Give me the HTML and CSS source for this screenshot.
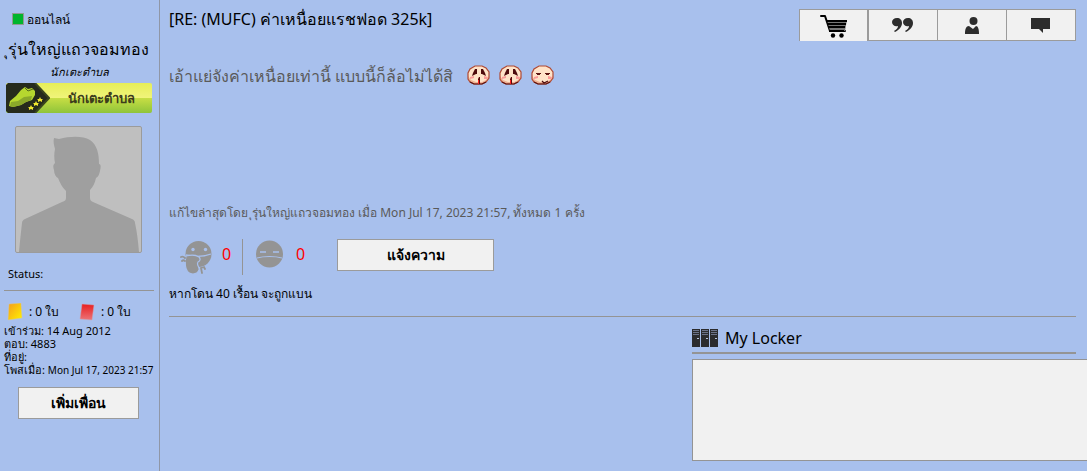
FILE: index.html
```html
<!DOCTYPE html>
<html lang="th">

<head>
    <meta charset="UTF-8">
    <meta name="viewport" content="width=device-width, initial-scale=1.0">
    <title>[RE: (MUFC) ค่าเหนื่อยแรชฟอด 325k]</title>
    <link rel="stylesheet" href="styles.css">
</head>

<body>
    <svg class="sprite" width="0" height="0">
        <symbol id="face" viewBox="0 0 23 20">
            <path d="M8 1h7l4 2 3 4v6l-3 4-4 2H7l-4-2-2-3V8l2-4z" fill="#ffe3c8" />
            <path d="M1 11l3 4 5 2h6l4-2 3-4v2l-3 4-4 2H7l-4-2-2-3z" fill="#f0b294" />
            <path d="M8 1h7l4 2 3 4v6l-3 4-4 2H7l-4-2-2-3V8l2-4z" fill="none" stroke="#b04a34" stroke-width="1.200" />
            <path d="M3 17l4 2h8l4-2" fill="none" stroke="#5d1410" stroke-width="1.200" />
            <path d="M3 12l4-1v2l-4 1zM17 11l4 1-1 2h-3z" fill="#fb9a98" />
        </symbol>
        <symbol id="cry" viewBox="0 0 23 20">
            <use href="#face" />
            <path d="M8 4h2v5H9l-4 2 1-3zM14 4h2l2 4 1 3-4-2h-1z" fill="#4e0b0d" />
            <path d="M11 19v-5l1-2h1v7z" fill="#5d080b" />
            <path d="M11 15h1v4h-1z" fill="#ff2020" />
        </symbol>
        <symbol id="smirk" viewBox="0 0 23 20">
            <use href="#face" />
            <path d="M5 8h5v1H9v1H6V9H5zM14 8h5v1h-1v1h-3V9h-1z" fill="#5d1410" />
            <path d="M11 16l2 2 4-2" fill="none" stroke="#4e0b0d" stroke-width="1.200" />
        </symbol>
    </svg>

    <div class="post">
        <aside class="profile">
            <div class="profile__online"><span class="dot"></span>ออนไลน์</div>
            <div class="profile__name">ุรุ่นใหญ่แถวจอมทอง</div>
            <div class="profile__rank">นักเตะตำบล</div>
            <div class="badge">
                <svg class="badge__icon" width="44" height="30" viewBox="0 0 44 30">
                    <path d="M2 0h27l14 15-14 15H2l-2-2V2z" fill="#262b1c" />
                    <path d="M29 0l14 15-14 15" fill="none" stroke="#3a451d" stroke-width="2" />
                    <path d="M4 18l6-5 5-6 4-3 3 2 4-1 3 3v4l-3 5-6 2-5 3-8 2-4-1z" fill="#b6d72f" />
                    <path d="M5 19l7-1 6-4 8-1-1 4-5 2-5 3-8 2-3-1z" fill="#8aa82a" />
                    <path d="M19 5l3 3 5-2" fill="none" stroke="#526a1a" />
                    <path d="M25 22l1 2h2l-1 1v2l-2-1-2 1v-2l-1-1h2zM30 18l1 2h2l-1 1v2l-2-1-2 1v-2l-1-1h2zM34 14l1 2h2l-1 1v2l-2-1-2 1v-2l-1-1h2z" fill="#f0e62f" />
                </svg>
                <span class="badge__text">นักเตะตำบล</span>
            </div>
            <svg class="avatar" viewBox="0 0 125 125">
                <path d="M38 11l5 1c12-3 24-3 31 1 7 5 9 13 9 24 2 0 2 3 1 7-1 4-2 6-4 7-1 5-3 9-6 12v8c0 2 1 3 3 4l39 17c2 1 3 2 3 4 2 9 3 18 4 29H3c1-12 2-20 3-29 0-2 1-3 3-4l37-17c3-1 4-2 4-4v-7c-4-4-6-8-8-13-2-1-4-4-4-8-1-4-1-5 1-7-1-5-1-9 0-14-1-4-2-7-1-11z" fill="#9f9f9f" />
            </svg>
            <div class="profile__status">Status:</div>
            <div class="cards">
                <svg class="cards__icon" viewBox="0 0 16 18">
                    <defs>
                        <linearGradient id="yellow" x1="0" y1="0" x2="1" y2="1">
                            <stop offset="0" stop-color="#f49c1c" />
                            <stop offset="1" stop-color="#fff200" />
                        </linearGradient>
                    </defs>
                    <path d="M2 1l12-1 1 15-14 2z" fill="url(#yellow)" stroke="#cfc7a8" stroke-width=".5" />
                </svg>
                <span class="cards__count">: 0 ใบ</span>
                <svg class="cards__icon" viewBox="0 0 16 18">
                    <defs>
                        <linearGradient id="red" x1="0" y1="0" x2="0" y2="1">
                            <stop offset="0" stop-color="#e81e20" />
                            <stop offset="1" stop-color="#ec7478" />
                        </linearGradient>
                    </defs>
                    <path d="M3 1l12 1-2 15-12-1z" fill="url(#red)" stroke="#c9a5b4" stroke-width=".5" />
                </svg>
                <span class="cards__count">: 0 ใบ</span>
            </div>
            <ul class="info">
                <li>เข้าร่วม: 14 Aug 2012</li>
                <li>ตอบ: 4883</li>
                <li>ที่อยู่:</li>
                <li>โพสเมื่อ: <span class="info__date">Mon Jul 17, 2023 21:57</span></li>
            </ul>
            <button class="btn btn--friend" type="button">เพิ่มเพื่อน</button>
        </aside>

        <main class="content">
            <header class="head">
                <h1 class="head__title">[RE: (MUFC) ค่าเหนื่อยแรชฟอด 325k]</h1>
                <nav class="tools">
                    <button class="tools__item tools__item--active" type="button" aria-label="ตะกร้า">
                        <svg width="28" height="24" viewBox="0 0 28 24">
                            <path d="M1 2h4l5 15h15" fill="none" stroke="#000" stroke-width="2" stroke-linecap="round" stroke-linejoin="round" />
                            <path d="M7 6h20l-2 11H10z" fill="#777" />
                            <path d="M6 7h21M7 10h19M8 13h17M9 17h15" stroke="#000" stroke-width="2" />
                            <circle cx="13" cy="21.500" r="2.200" />
                            <circle cx="21.500" cy="21.500" r="2.200" />
                        </svg>
                    </button>
                    <button class="tools__item" type="button" aria-label="อ้างอิง">
                        <svg width="22" height="14" viewBox="0 0 22 14" fill="#2d2d2d">
                            <path id="quote" d="M5 0c3 0 5 2 5 5 0 4-3 7-7 9l-1-1c3-2 4-3 4-5-3 1-6-1-6-4 0-2 2-4 5-4z" />
                            <use href="#quote" x="11" />
                        </svg>
                    </button>
                    <button class="tools__item" type="button" aria-label="ข้อมูลส่วนตัว">
                        <svg width="14" height="17" viewBox="0 0 14 17" fill="#2d2d2d">
                            <circle cx="8.500" cy="4" r="4" />
                            <path d="M0 17c0-5 1-8 4-8l4 3 3-3c2 0 3 3 3 8z" />
                        </svg>
                    </button>
                    <button class="tools__item" type="button" aria-label="ข้อความ">
                        <svg width="20" height="16" viewBox="0 0 20 16" fill="#2d2d2d">
                            <path d="M0 1h19v11h-7v4l-4-4H0z" />
                        </svg>
                    </button>
                </nav>
            </header>

            <div class="message">
                เอ้าแย่จังค่าเหนื่อยเท่านี้ แบบนี้ก็ล้อไม่ได้สิ
                <span class="message__emoji">
                    <svg class="emoji"><use href="#cry" /></svg>
                    <svg class="emoji"><use href="#cry" /></svg>
                    <svg class="emoji"><use href="#smirk" /></svg>
                </span>
            </div>
            <p class="edited">แก้ไขล่าสุดโดย ุรุ่นใหญ่แถวจอมทอง เมื่อ Mon Jul 17, 2023 21:57, ทั้งหมด 1 ครั้ง</p>

            <div class="votes">
                <div class="vote">
                    <svg class="vote__icon" viewBox="0 0 34 36">
                        <circle cx="18.500" cy="15" r="13" fill="#949494" />
                        <circle cx="13" cy="10.500" r="1.700" fill="#a8c0ed" />
                        <circle cx="25.500" cy="10.500" r="1.700" fill="#a8c0ed" />
                        <path d="M6 16c8 2 17 2 25-1" fill="none" stroke="#a8c0ed" stroke-width="1.300" />
                        <path d="M6 17c4-1 10-1 13 1 2 2 1 4-1 5-2 3 2 5 1 8s-3 4-6 4c-7 0-9-8-7-18z" fill="#949494" stroke="#a8c0ed" stroke-width="1.200" />
                        <path d="M1 18c2-1 3 0 4 1M2 22c1-1 2-1 3 0M21 29l1 5M21 29l3-1 1 2" fill="none" stroke="#949494" stroke-width="1.800" stroke-linecap="round" />
                    </svg>
                    <span class="vote__count">0</span>
                </div>
                <div class="vote vote--down">
                    <svg class="vote__icon" viewBox="0 0 34 36">
                        <circle cx="15.500" cy="15" r="13.500" fill="#949494" />
                        <path d="M6 13h6M19 13h6" fill="none" stroke="#a8c0ed" stroke-width="1.400" />
                        <path d="M3 19c7-2 18-2 25 0" fill="none" stroke="#a8c0ed" stroke-width="1.200" />
                    </svg>
                    <span class="vote__count">0</span>
                </div>
                <button class="btn btn--report" type="button">แจ้งความ</button>
            </div>
            <p class="hint">หากโดน 40 เรื้อน จะถูกแบน</p>

            <section class="locker">
                <h2 class="locker__title">
                    <svg width="26" height="18" viewBox="0 0 26 18">
                        <g id="door">
                            <path d="M0 0h8v18H0z" fill="#2b2b2d" />
                            <path d="M1 1h6v1H1zM1 3h6v1H1zM1 5h6v1H1z" fill="#6b7288" />
                            <path d="M5 9h2v1H5z" fill="#b8c4dc" />
                        </g>
                        <use href="#door" x="9" />
                        <use href="#door" x="18" />
                    </svg>
                    My Locker
                </h2>
                <div class="locker__box"></div>
            </section>
        </main>
    </div>
</body>

</html>
```
FILE: styles.css
```css
*,
::after,
::before {
    box-sizing: border-box;
}

body {
    margin: 0;
    overflow-x: hidden;
    background: #a8c0ed;
    font-family: "Noto Sans", "Liberation Sans", sans-serif;
    font-size: 12px;
    color: #000;
}

h1,
h2,
p,
ul {
    margin: 0;
    padding: 0;
    font-weight: normal;
}

svg {
    flex: none;
}

.sprite {
    position: absolute;
}

.post {
    display: flex;
    min-height: 100vh;
}

.profile {
    flex: none;
    width: 160px;
    padding: 9px 5px 0 4px;
    border-right: 1px solid #8f96a6;
}

.profile__online {
    display: flex;
    align-items: center;
    gap: 3px;
    height: 20px;
    padding-left: 8px;
}

.dot {
    width: 12px;
    height: 12px;
    border: 1px solid #8f9a92;
    background: #00b52d;
}

.profile__name {
    height: 32px;
    padding-left: 4px;
    line-height: 40px;
    font-size: 16px;
    white-space: nowrap;
}

.profile__rank {
    height: 22px;
    line-height: 22px;
    font-size: 11px;
    font-style: italic;
    text-align: center;
}

.badge {
    display: flex;
    align-items: center;
    height: 30px;
    margin: 0 2px;
    border-radius: 2px;
    background: linear-gradient(#e6ee58, #f0f47a 50%, #c8de44 50%, #8fc43a);
}

.badge__text {
    flex: 1;
    font-size: 13px;
    font-weight: bold;
    text-align: center;
    color: #3c3c1c;
}

.avatar {
    display: block;
    width: 127px;
    height: 127px;
    margin: 13px 0 0 11px;
    border: 1px solid #9b9b9b;
    border-radius: 2px;
    background: #bfbfbf;
}

.profile__status {
    height: 38px;
    padding-left: 4px;
    border-bottom: 1px solid #949494;
    line-height: 42px;
    font-size: 11px;
}

.cards {
    display: flex;
    align-items: center;
    height: 33px;
    padding: 8px 0 0 3px;
}

.cards__icon {
    width: 16px;
    height: 18px;
}

.cards__count {
    width: 56px;
    padding-left: 6px;
    white-space: nowrap;
}

.info {
    list-style: none;
    line-height: 13px;
    font-size: 11px;
    white-space: nowrap;
}

.info__date {
    font-size: 10px;
}

.btn {
    height: 32px;
    padding: 0;
    border: 1px solid #9b9b9b;
    background: #f1f1f1;
    font: bold 14px "Noto Sans", "Liberation Sans", sans-serif;
    color: #000;
}

.btn--friend {
    width: 121px;
    margin: 10px 0 0 14px;
}

.btn--report {
    width: 157px;
    margin-left: 20px;
}

.content {
    flex: 1;
    min-width: 0;
    padding: 9px 11px 0 9px;
}

.head {
    display: flex;
    justify-content: space-between;
}

.head__title {
    line-height: 20px;
    font-size: 16px;
}

.tools {
    display: flex;
}

.tools__item {
    display: flex;
    align-items: center;
    justify-content: center;
    width: 70px;
    height: 32px;
    margin-left: -1px;
    padding: 0;
    border: 1px solid #9b9b9b;
    background: #f1f1f1;
}

.tools__item--active {
    border-right-width: 2px;
    border-bottom: 0;
}

.message {
    display: flex;
    align-items: center;
    gap: 14px;
    height: 163px;
    padding-bottom: 92px;
    font-size: 16px;
    color: #5a5a5a;
}

.message__emoji {
    display: flex;
    gap: 9px;
    padding-bottom: 4px;
}

.emoji {
    width: 23px;
    height: 20px;
}

.edited {
    line-height: 18px;
    font-size: 12px;
    color: #5a5a5a;
}

.votes {
    display: flex;
    align-items: flex-start;
    padding-top: 17px;
}

.vote {
    display: flex;
    width: 74px;
    height: 36px;
    padding-left: 11px;
    border-right: 1px solid #949494;
}

.vote--down {
    border-right: 0;
}

.vote__icon {
    width: 34px;
    height: 36px;
}

.vote__count {
    padding-left: 8px;
    line-height: 30px;
    font-size: 16px;
    color: #f00;
}

.hint {
    padding: 8px 0 12px;
    border-bottom: 1px solid #949494;
    line-height: 21px;
}

.locker {
    width: 384px;
    margin-left: auto;
}

.locker__title {
    display: flex;
    align-items: center;
    gap: 7px;
    height: 37px;
    padding-top: 7px;
    border-bottom: 2px solid #949494;
    font-size: 16px;
}

.locker__box {
    width: 420px;
    height: 102px;
    margin-top: 5px;
    border: 1px solid #949494;
    background: #f1f1f1;
}
```
